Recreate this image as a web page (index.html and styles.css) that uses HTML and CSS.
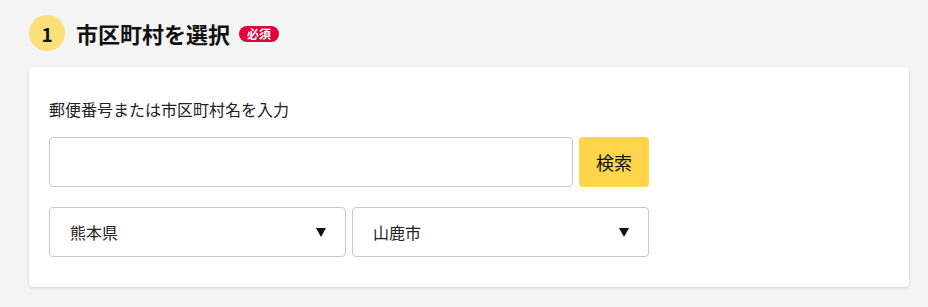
FILE: index.html
```html
<!DOCTYPE html>
<html lang="ja">
<head>
<meta charset="utf-8">
<link rel="stylesheet" href="styles.css">
</head>
<body>
<div class="page">
  <div class="heading">
    <span class="step">1</span>
    <h2 class="title">市区町村を選択</h2>
    <span class="badge">必須</span>
  </div>
  <div class="card">
    <label class="label">郵便番号または市区町村名を入力</label>
    <div class="search-row">
      <input class="search-input" type="text">
      <button class="search-btn">検索</button>
    </div>
    <div class="select-row">
      <div class="select"><span>熊本県</span><span class="arrow"></span></div>
      <div class="select"><span>山鹿市</span><span class="arrow"></span></div>
    </div>
  </div>
</div>
</body>
</html>
```
FILE: styles.css
```css
* { box-sizing: border-box; }
html, body { margin: 0; padding: 0; }
body {
  background: #f4f4f4;
  font-family: "Noto Sans CJK JP", "Noto Sans", sans-serif;
  color: #222;
  width: 928px;
  height: 307px;
  overflow: hidden;
}
.page { padding: 15px 19px 0 29px; }
.heading {
  display: flex;
  align-items: center;
  height: 36px;
}
.step {
  width: 36px;
  height: 36px;
  border-radius: 50%;
  background: #fde07a;
  display: flex;
  align-items: center;
  justify-content: center;
  font-weight: 700;
  font-size: 19px;
  color: #111;
}
.title {
  margin: 0 0 0 11px;
  font-size: 22px;
  font-weight: 700;
  color: #111;
  line-height: 36px;
}
.badge {
  margin-left: 9px;
  margin-top: 2px;
  background: #e2003b;
  color: #fff;
  font-size: 12px;
  font-weight: 700;
  height: 16px;
  line-height: 16px;
  padding: 0 8px;
  border-radius: 8px;
}
.card {
  margin-top: 16px;
  width: 880px;
  height: 220px;
  background: #fff;
  border-radius: 4px;
  box-shadow: 0 1px 3px rgba(0,0,0,0.15);
  padding: 30px 20px 30px 20px;
}
.label {
  display: block;
  font-size: 16px;
  line-height: 24px;
  color: #222;
}
.search-row {
  display: flex;
  gap: 6px;
  margin-top: 16px;
}
.search-input {
  width: 524px;
  height: 50px;
  border: 1px solid #c8c8c8;
  border-radius: 4px;
  font-size: 16px;
  padding: 0 16px;
  outline: none;
}
.search-btn {
  width: 70px;
  height: 50px;
  border: none;
  border-radius: 4px;
  background: #ffd54a;
  font-family: inherit;
  font-size: 18px;
  color: #111;
  padding: 0;
}
.select-row {
  display: flex;
  gap: 6px;
  margin-top: 20px;
  width: 600px;
}
.select {
  flex: 1;
  height: 50px;
  border: 1px solid #c8c8c8;
  border-radius: 4px;
  display: flex;
  align-items: center;
  justify-content: space-between;
  padding: 0 19px 0 20px;
  font-size: 16px;
  color: #222;
}
.arrow {
  width: 0;
  height: 0;
  border-left: 5px solid transparent;
  border-right: 5px solid transparent;
  border-top: 9px solid #111;
}
```
